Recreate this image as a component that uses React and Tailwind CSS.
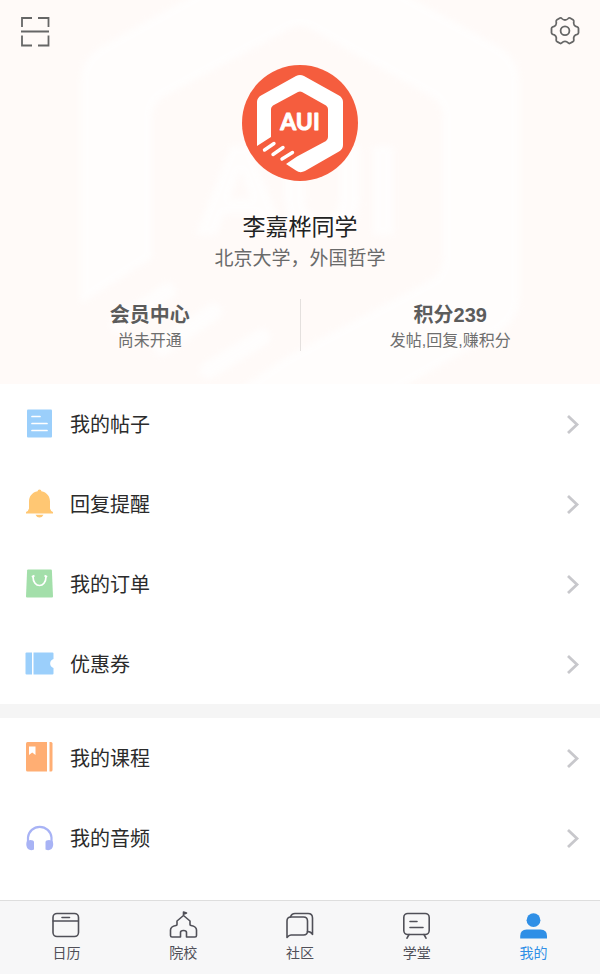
import { useState } from 'react';

function Logo({ textY }) {
  return (
    <>
      <path
        fill="#fff"
        d="M27 91V47Q27 43 31 40.500L66 21Q70 19 74 21L109 40.500Q113 43 113 47V90Q113 94 109 96.500L75 116Q70 118.500 66 115.500L56 109L67 101.500L96 86Q98 84.500 98 82V54Q98 52 96 50.500L72 37Q70 36 68 37L43 50.500Q41 52 41 54V82Z"
      />
      <path
        stroke="#fff"
        strokeWidth="3.400"
        strokeLinecap="round"
        d="M34.500 95 44 88.500M43 99.500 53 92.500M52 104 62.500 97.500"
      />
      <text
        x="70"
        y={textY}
        fill="#fff"
        stroke="#fff"
        strokeWidth="0.900"
        strokeLinejoin="round"
        textAnchor="middle"
        className="font-['Lato','Liberation_Sans',sans-serif] text-[23px] font-bold"
      >
        AUI
      </text>
    </>
  );
}

function Avatar() {
  return (
    <svg viewBox="12 10 116 116" fill="none" className="size-[116px]" role="img" aria-label="AUI">
      <circle cx="70" cy="68" r="58" fill="#f55d3e" />
      <Logo textY={75} />
    </svg>
  );
}

function ScanIcon() {
  return (
    <svg viewBox="0 0 30 31" fill="none" stroke="#666" strokeWidth="1.800" className="h-[31px] w-[30px]">
      <path d="M2 11V2H12M18 2H28.500V11M1 15.500H29M2 19.500V29.500H12M18 29.500H28.500V19.500" />
    </svg>
  );
}

function GearIcon() {
  return (
    <svg viewBox="0 0 30 30" fill="none" stroke="#666" strokeWidth="1.800" strokeLinejoin="round" className="size-[30px]">
      <path d="M10 2Q11 1.500 11.800 2.500Q13.200 4 15 4Q16.800 4 18.200 2.500Q19 1.500 20 2L23 3.700Q24 4.300 23.800 5.500Q23.300 7.500 24.200 9Q25.200 10.400 27.200 10.800Q28.500 11.200 28.500 12.400V16.800Q28.500 18 27.200 18.400Q25.200 18.800 24.200 20.300Q23.300 21.800 23.800 23.800Q24 25 23 25.600L20 27.300Q19 27.800 18.200 26.800Q16.800 25.300 15 25.300Q13.200 25.300 11.800 26.800Q11 27.800 10 27.300L7 25.600Q6 25 6.200 23.800Q6.700 21.800 5.800 20.300Q4.800 18.800 2.800 18.400Q1.500 18 1.500 16.800V12.400Q1.500 11.200 2.800 10.800Q4.800 10.400 5.800 9Q6.700 7.500 6.200 5.500Q6 4.300 7 3.700Z" />
      <circle cx="15" cy="14.700" r="4.400" />
    </svg>
  );
}

const groups = [
  [
    {
      label: '我的帖子',
      icon: (
        <>
          <rect x="3" y="0.500" width="25" height="28" rx="1" fill="#9bcffb" />
          <path d="M8 7.500H16M8 14.500H23M8 21.500H23" stroke="#fff" strokeWidth="1.700" strokeLinecap="round" />
        </>
      ),
    },
    {
      label: '回复提醒',
      icon: (
        <g fill="#ffc773">
          <path d="M13.600 2.200Q13.600 0.500 15.500 0.500T17.400 2.200C23 3.200 26 7.500 26 12.500V19.500Q26.500 22 29 23V24.500H2V23Q4.500 22 5 19.500V12.500C5 7.500 8 3.200 13.600 2.200Z" />
          <path d="M11.500 25.800H19.500Q18.500 28.500 15.500 28.500T11.500 25.800Z" />
        </g>
      ),
    },
    {
      label: '我的订单',
      icon: (
        <>
          <path d="M4 0.500H27Q27.800 0.500 27.900 1.500L29 27.500Q29 28.500 28 28.500H3Q2 28.500 2 27.500L3.100 1.500Q3.200 0.500 4 0.500Z" fill="#a3dfaa" />
          <path d="M9 7.500C9 19.500 22 19.500 22 7.500M7.800 7.800L10.500 6.600M20.500 6.600L23.200 7.800" stroke="#fff" strokeWidth="1.700" />
        </>
      ),
    },
    {
      label: '优惠券',
      icon: (
        <g fill="#9bcffb">
          <path d="M2.500 3.500H8V25.500H2.500Q1.500 25.500 1.500 24.500V4.500Q1.500 3.500 2.500 3.500Z" />
          <path d="M9.500 3.500H28.500Q29.500 3.500 29.500 4.500V10A4.700 4.700 0 0 0 29.500 19V24.500Q29.500 25.500 28.500 25.500H9.500Z" />
        </g>
      ),
    },
  ],
  [
    {
      label: '我的课程',
      icon: (
        <>
          <path d="M3.500 -1H23V28.500H3.500Q2 28.500 2 27V0.500Q2 -1 3.500 -1Z" fill="#ffae73" />
          <path d="M25.500 -1H27Q28.500 -1 28.500 0.500V27Q28.500 28.500 27 28.500H25.500Z" fill="#ffae73" />
          <path d="M5 3.500H11.500V12L8.200 9.500L5 12Z" fill="#fff" />
        </>
      ),
    },
    {
      label: '我的音频',
      icon: (
        <>
          <path d="M4 20V14.500A11.800 11.800 0 0 1 27.500 14.500V20" stroke="#a8b3f5" strokeWidth="2.200" />
          <path d="M2.700 18.500Q5.500 16 9 17.500Q10 18 10 19V26.500Q6.500 28 4 26Q1.500 23 2.700 18.500ZM28.800 18.500Q26 16 22.500 17.500Q21.500 18 21.500 19V26.500Q25 28 27.500 26Q30 23 28.800 18.500Z" fill="#a8b3f5" />
        </>
      ),
    },
  ],
];

const tabs = [
  {
    label: '日历',
    icon: (
      <>
        <rect x="1" y="2.500" width="25.500" height="23" rx="4" />
        <path d="M1.200 10H26.300M10 6.500H17.500" />
      </>
    ),
  },
  {
    label: '院校',
    icon: (
      <path d="M14.500 4V1L17.500 2L14.500 3.200M14.500 4.500L8 10V13.500Q8 14.300 7 14.500Q1.500 15.500 1.500 19V24.500Q1.500 26 3 26H11.500V21.500Q11.500 19.500 14.500 19.500T17.500 21.500V26H26Q27.500 26 27.500 24.500V19Q27.500 15.500 22 14.500Q21 14.300 21 13.500V10Z" />
    ),
  },
  {
    label: '社区',
    icon: (
      <>
        <path d="M2 26.500V10Q2 6 6 6H18.500Q22.500 6 22.500 10V20Q22.500 24 18.500 24H6Q4 24 2 26.500Z" />
        <path d="M5.500 6Q6.500 2.500 10 2.500H23Q27.500 2.500 27.500 7V23.500Q26 20.500 22.500 20.500" />
      </>
    ),
  },
  {
    label: '学堂',
    icon: (
      <>
        <rect x="1.800" y="2.500" width="25.400" height="21" rx="4" />
        <path d="M8 10.500H15M8 16.500H21M7 23.500L5 27.200M22 23.500L24 27.200" />
      </>
    ),
  },
  {
    label: '我的',
    icon: (
      <g fill="currentColor" stroke="none">
        <circle cx="14.500" cy="9.200" r="6.900" />
        <path d="M1.200 27.500V25Q1.200 18.500 7.700 18.500H21.500Q28 18.500 28 25V27.500Z" />
      </g>
    ),
  },
];

function Stat({ title, note }) {
  return (
    <a href="#" className="flex-1 text-center">
      <div className="text-xl leading-8 font-bold text-[#5c5c5c]">{title}</div>
      <div className="text-base leading-5 text-[#6e6e6e]">{note}</div>
    </a>
  );
}

function MenuRow({ label, icon }) {
  return (
    <a href="#" className="flex h-20 items-center pr-5 pl-6">
      <svg viewBox="0 0 31 30" fill="none" className="h-[30px] w-[31px] shrink-0 overflow-visible">
        {icon}
      </svg>
      <span className="ml-[15px] flex-1 pt-0.5 text-xl text-[#2b2b2b]">{label}</span>
      <svg viewBox="0 0 14 20" fill="none" stroke="#c8c8cc" strokeWidth="2.800" className="h-5 w-3.5">
        <path d="M2 2L11 10.500L2 19" />
      </svg>
    </a>
  );
}

export default function App() {
  const [active, setActive] = useState('我的');

  return (
    <div className="flex min-h-screen flex-col bg-white font-['Liberation_Sans','Noto_Sans_CJK_SC',sans-serif]">
      <header className="relative overflow-hidden bg-[#fffaf8] px-5 pt-4 pb-[33px]">
        <svg
          viewBox="0 0 140 140"
          fill="none"
          aria-hidden="true"
          className="absolute -top-[160px] left-1/2 h-[714px] w-[714px] -translate-x-1/2 opacity-70 blur-[3px]"
        >
          <Logo textY={77} />
        </svg>
        <div className="relative">
          <div className="flex h-[30px] justify-between">
            <button type="button" aria-label="扫一扫">
              <ScanIcon />
            </button>
            <button type="button" aria-label="设置">
              <GearIcon />
            </button>
          </div>
          <div className="mt-[19px] flex flex-col items-center">
            <Avatar />
            <h1 className="mt-7 text-[23px] leading-9 text-[#222]">李嘉桦同学</h1>
            <p className="text-[19px] leading-7 text-[#6a6a6a]">北京大学，外国哲学</p>
          </div>
          <div className="-mx-5 mt-[26px] flex">
            <Stat title="会员中心" note="尚未开通" />
            <div className="w-px bg-[#e4e0de]" />
            <Stat title="积分239" note="发帖,回复,赚积分" />
          </div>
        </div>
      </header>

      <main className="flex-1 divide-y-14 divide-[#f5f5f5]">
        {groups.map((rows, i) => (
          <section key={i}>
            {rows.map((row) => (
              <MenuRow key={row.label} {...row} />
            ))}
          </section>
        ))}
      </main>

      <nav className="flex h-[74px] border-t border-[#dedede] bg-[#f7f7f8] px-2">
        {tabs.map((tab) => (
          <button
            key={tab.label}
            type="button"
            onClick={() => setActive(tab.label)}
            className={`flex flex-1 flex-col items-center pt-2.5 text-sm ${
              active === tab.label ? 'text-[#2f8fe6]' : 'text-[#505058]'
            }`}
          >
            <svg viewBox="0 0 29 28" fill="none" stroke="currentColor" strokeWidth="1.600" strokeLinejoin="round" strokeLinecap="round" className="h-7 w-[29px]">
              {tab.icon}
            </svg>
            <span className="mt-1">{tab.label}</span>
          </button>
        ))}
      </nav>
    </div>
  );
}
